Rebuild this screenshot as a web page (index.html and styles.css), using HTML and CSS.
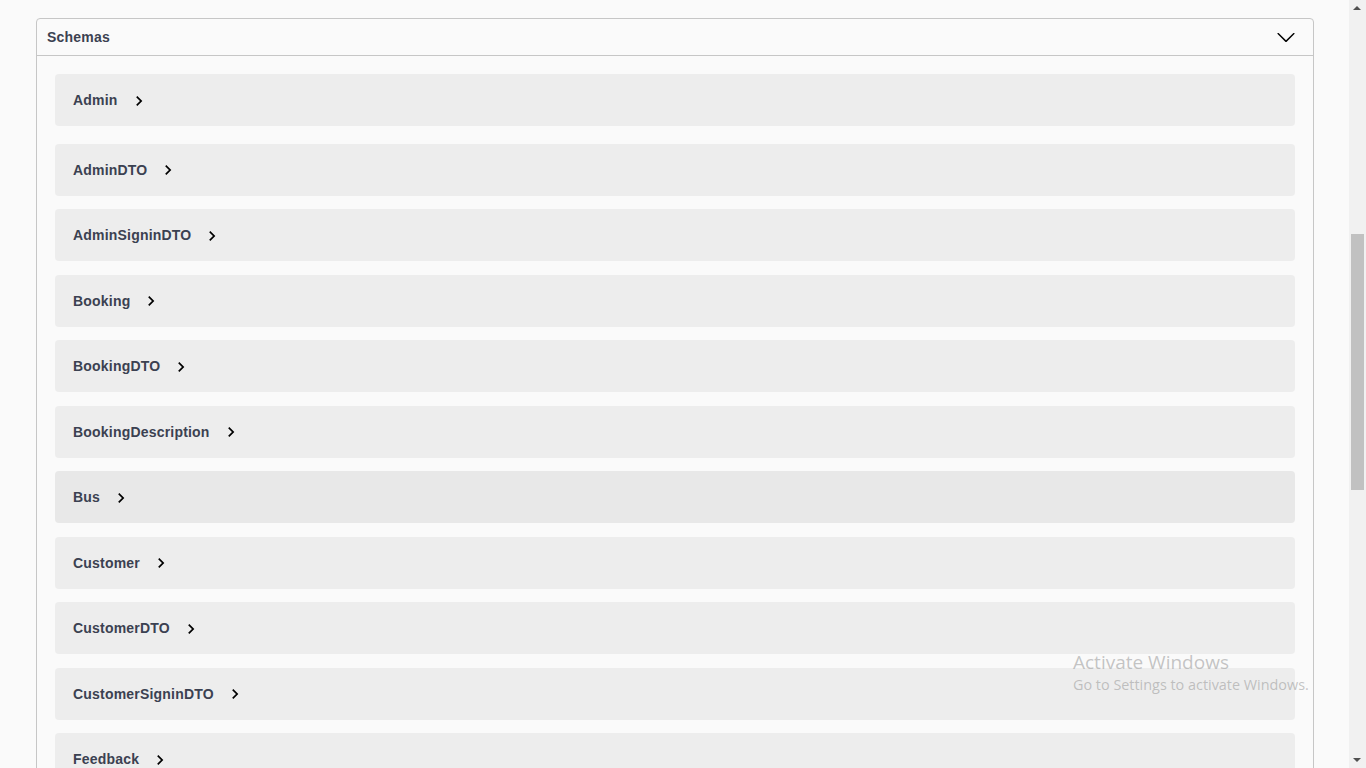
FILE: index.html
```html
<!DOCTYPE html>
<html lang="en">
<head>
<meta charset="utf-8">
<title>Schemas</title>
<link rel="stylesheet" href="styles.css">
</head>
<body>
<div class="viewport">
  <main class="page">
    <section class="models">
      <header class="models-head">
        <span class="models-title">Schemas</span>
        <svg class="chev-down" width="20" height="20" viewBox="0 0 20 20"><path d="M17.418 6.109c.272-.268.709-.268.979 0s.271.701 0 .969l-7.908 7.83c-.27.268-.707.268-.979 0l-7.908-7.830c-.27-.268-.27-.701 0-.969.271-.268.709-.268.979 0L10 13.25l7.418-7.141z"/></svg>
      </header>
      <div class="models-body">
        <div class="model first"><span class="model-name">Admin</span><svg class="chev" width="20" height="20" viewBox="0 0 24 24"><path d="M10 6L8.59 7.41 13.17 12l-4.58 4.59L10 18l6-6z"/></svg></div>
        <div class="model"><span class="model-name">AdminDTO</span><svg class="chev" width="20" height="20" viewBox="0 0 24 24"><path d="M10 6L8.59 7.41 13.17 12l-4.58 4.59L10 18l6-6z"/></svg></div>
        <div class="model"><span class="model-name">AdminSigninDTO</span><svg class="chev" width="20" height="20" viewBox="0 0 24 24"><path d="M10 6L8.59 7.41 13.17 12l-4.58 4.59L10 18l6-6z"/></svg></div>
        <div class="model"><span class="model-name">Booking</span><svg class="chev" width="20" height="20" viewBox="0 0 24 24"><path d="M10 6L8.59 7.41 13.17 12l-4.58 4.59L10 18l6-6z"/></svg></div>
        <div class="model"><span class="model-name">BookingDTO</span><svg class="chev" width="20" height="20" viewBox="0 0 24 24"><path d="M10 6L8.59 7.41 13.17 12l-4.58 4.59L10 18l6-6z"/></svg></div>
        <div class="model"><span class="model-name">BookingDescription</span><svg class="chev" width="20" height="20" viewBox="0 0 24 24"><path d="M10 6L8.59 7.41 13.17 12l-4.58 4.59L10 18l6-6z"/></svg></div>
        <div class="model hover"><span class="model-name">Bus</span><svg class="chev" width="20" height="20" viewBox="0 0 24 24"><path d="M10 6L8.59 7.41 13.17 12l-4.58 4.59L10 18l6-6z"/></svg></div>
        <div class="model"><span class="model-name">Customer</span><svg class="chev" width="20" height="20" viewBox="0 0 24 24"><path d="M10 6L8.59 7.41 13.17 12l-4.58 4.59L10 18l6-6z"/></svg></div>
        <div class="model"><span class="model-name">CustomerDTO</span><svg class="chev" width="20" height="20" viewBox="0 0 24 24"><path d="M10 6L8.59 7.41 13.17 12l-4.58 4.59L10 18l6-6z"/></svg></div>
        <div class="model"><span class="model-name">CustomerSigninDTO</span><svg class="chev" width="20" height="20" viewBox="0 0 24 24"><path d="M10 6L8.59 7.41 13.17 12l-4.58 4.59L10 18l6-6z"/></svg></div>
        <div class="model"><span class="model-name">Feedback</span><svg class="chev" width="20" height="20" viewBox="0 0 24 24"><path d="M10 6L8.59 7.41 13.17 12l-4.58 4.59L10 18l6-6z"/></svg></div>
      </div>
    </section>
  </main>
  <div class="scrollbar">
    <div class="sb-arrow up"></div>
    <div class="sb-track"><div class="sb-thumb"></div></div>
    <div class="sb-arrow down"></div>
  </div>
</div>
<div class="watermark">
  <div class="wm-title">Activate Windows</div>
  <div class="wm-sub">Go to Settings to activate Windows.</div>
</div>
</body>
</html>
```
FILE: styles.css
```css
html, body {
  margin: 0;
  padding: 0;
  height: 100%;
  overflow: hidden;
  background: #fafafa;
}
body {
  font-family: "Liberation Sans", Arial, sans-serif;
  color: #3b4151;
}
.viewport {
  display: flex;
  height: 768px;
}
.page {
  flex: 1;
  padding: 18px 35px 0 36px;
  overflow: hidden;
}
.models {
  border: 1px solid #c6c6c6;
  border-radius: 4px;
}
.models-head {
  display: flex;
  align-items: center;
  justify-content: space-between;
  height: 36px;
  padding: 0 17px 0 10px;
  border-bottom: 1px solid #c6c6c6;
}
.models-title {
  font-size: 14px;
  font-weight: bold;
  letter-spacing: 0.2px;
}
.chev-down {
  fill: #000;
  display: block;
}
.models-body {
  padding: 18px 18px 0 18px;
}
.model {
  display: flex;
  align-items: center;
  height: 52px;
  margin-bottom: 13.5px;
  padding-left: 18px;
  background: #ededed;
  border-radius: 4px;
}
.model.first {
  margin-bottom: 17.5px;
}
.model.hover {
  background: #e8e8e8;
}
.model-name {
  font-size: 14px;
  font-weight: bold;
  letter-spacing: 0.2px;
}
.chev {
  display: block;
  margin-left: 11px;
  margin-top: 1px;
  fill: #000;
}
.scrollbar {
  width: 17px;
  flex: none;
  background: #f1f1f1;
  display: flex;
  flex-direction: column;
}
.sb-arrow {
  height: 17px;
  flex: none;
  position: relative;
}
.sb-arrow.up::after,
.sb-arrow.down::after {
  content: "";
  position: absolute;
  left: 4px;
  width: 0;
  height: 0;
  border-left: 4px solid transparent;
  border-right: 4px solid transparent;
}
.sb-arrow.up::after {
  top: 6px;
  border-bottom: 4px solid #505050;
}
.sb-arrow.down::after {
  top: 7px;
  border-top: 4px solid #505050;
}
.sb-track {
  flex: 1;
  padding-top: 217px;
}
.sb-thumb {
  margin: 0 2px;
  height: 256px;
  background: #c1c1c1;
}
.watermark {
  position: absolute;
  left: 1073px;
  top: 650px;
  color: rgba(150, 150, 150, 0.55);
  font-family: "Open Sans", "Noto Sans", sans-serif;
  white-space: nowrap;
}
.wm-title {
  font-size: 19px;
  line-height: 24px;
}
.wm-sub {
  font-size: 14.4px;
  line-height: 22px;
}
```
